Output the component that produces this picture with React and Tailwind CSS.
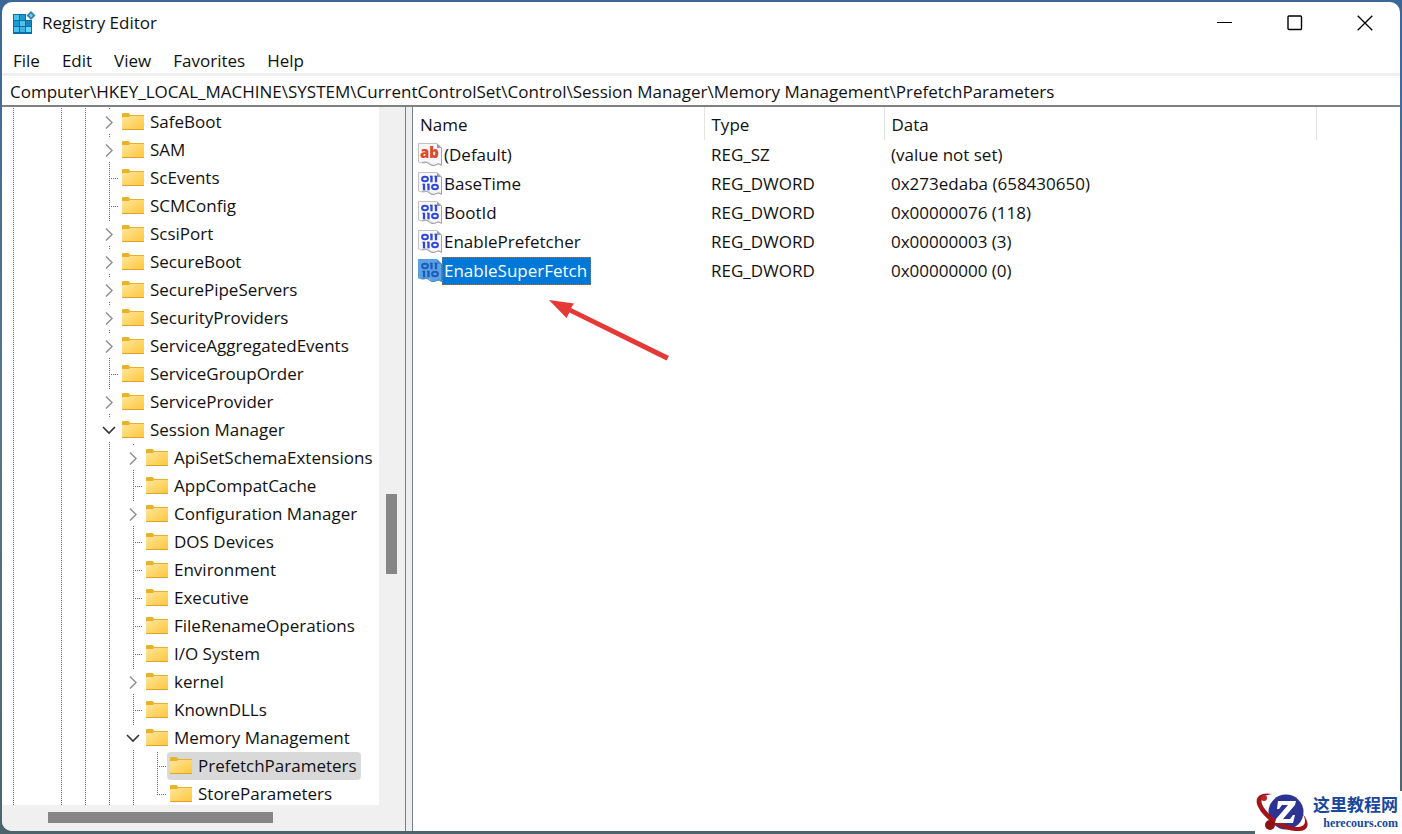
const PATH =
  "Computer\\HKEY_LOCAL_MACHINE\\SYSTEM\\CurrentControlSet\\Control\\Session Manager\\Memory Management\\PrefetchParameters";

const TREE = [
  { label: "SafeBoot", depth: 0, state: "closed" },
  { label: "SAM", depth: 0, state: "closed" },
  { label: "ScEvents", depth: 0 },
  { label: "SCMConfig", depth: 0 },
  { label: "ScsiPort", depth: 0, state: "closed" },
  { label: "SecureBoot", depth: 0, state: "closed" },
  { label: "SecurePipeServers", depth: 0, state: "closed" },
  { label: "SecurityProviders", depth: 0, state: "closed" },
  { label: "ServiceAggregatedEvents", depth: 0, state: "closed" },
  { label: "ServiceGroupOrder", depth: 0 },
  { label: "ServiceProvider", depth: 0, state: "closed" },
  { label: "Session Manager", depth: 0, state: "open" },
  { label: "ApiSetSchemaExtensions", depth: 1, state: "closed" },
  { label: "AppCompatCache", depth: 1 },
  { label: "Configuration Manager", depth: 1, state: "closed" },
  { label: "DOS Devices", depth: 1 },
  { label: "Environment", depth: 1 },
  { label: "Executive", depth: 1 },
  { label: "FileRenameOperations", depth: 1 },
  { label: "I/O System", depth: 1 },
  { label: "kernel", depth: 1, state: "closed" },
  { label: "KnownDLLs", depth: 1 },
  { label: "Memory Management", depth: 1, state: "open" },
  { label: "PrefetchParameters", depth: 2, selected: true },
  { label: "StoreParameters", depth: 2, last: true },
];

const VALUES = [
  { name: "(Default)", type: "REG_SZ", data: "(value not set)", kind: "string" },
  { name: "BaseTime", type: "REG_DWORD", data: "0x273edaba (658430650)" },
  { name: "BootId", type: "REG_DWORD", data: "0x00000076 (118)" },
  { name: "EnablePrefetcher", type: "REG_DWORD", data: "0x00000003 (3)" },
  { name: "EnableSuperFetch", type: "REG_DWORD", data: "0x00000000 (0)", selected: true },
];

function AppIcon() {
  const cells = [
    [0, 0, "#4cc3ea"], [1, 0, "#1b9ad2"],
    [0, 1, "#1b9ad2"], [1, 1, "#4cc3ea"], [2, 1, "#1487c0"],
    [0, 2, "#4cc3ea"], [1, 2, "#3bb4e2"], [2, 2, "#63d4f4"],
  ];
  return (
    <svg width="24" height="24" viewBox="0 0 24 24" aria-hidden="true">
      <path d="M1 3h13v6h6v14H1z" fill="#0a6fa8" />
      {cells.map(([x, y, fill]) => (
        <rect key={`${x}${y}`} x={2 + x * 6} y={4 + y * 6} width="5" height="5" fill={fill} />
      ))}
      <path d="M19 0 23.500 4.500 19 9 14.500 4.500z" fill="#2b86b4" />
      <path d="M19 2.500 21 4.500 19 6.500 17 4.500z" fill="#7fcbe6" />
    </svg>
  );
}

function Folder() {
  return (
    <svg width="22" height="18" viewBox="0 0 22 18" className="shrink-0" aria-hidden="true">
      <defs>
        <linearGradient id="folder" x1="0" y1="0" x2="1" y2="1">
          <stop offset="0" stopColor="#ffe79a" />
          <stop offset="1" stopColor="#fdc63a" />
        </linearGradient>
      </defs>
      <path d="M0 1.2Q0 0 1.2 0H6.5L8.5 2H22V6H0z" fill="#e8b22c" />
      <path d="M0 4H6.5L8.5 3H22V17H0z" fill="url(#folder)" />
      <path d="M0 16.5H22" stroke="#dfa32a" />
    </svg>
  );
}

function Guide({ wide }) {
  return (
    <span className={wide ? "flex w-[23px] shrink-0 pl-[11px]" : "flex w-6 shrink-0 pl-3"}>
      <svg width="1" height="28" shapeRendering="crispEdges" aria-hidden="true">
        <path d="M.5 0V28" stroke="#6b6b6b" strokeDasharray="1 1" />
      </svg>
    </span>
  );
}

function Connector({ state, last }) {
  return (
    <svg width="22" height="28" viewBox="0 0 22 28" className="shrink-0" aria-hidden="true">
      <g stroke="#6b6b6b" strokeDasharray="1 1" shapeRendering="crispEdges" fill="none">
        {state ? <path d="M12.5 0V2M12.5 26V28" /> : <path d={last ? "M12.5 0V14" : "M12.5 0V28"} />}
        {!state && <path d="M12 14.5H22" />}
      </g>
      {state === "closed" && <path d="M9 8.5 15 14.5 9 20.5" fill="none" stroke="#8c8c8c" strokeWidth="1.4" />}
      {state === "open" && <path d="M6 11 12 17 18 11" fill="none" stroke="#333" strokeWidth="1.6" />}
    </svg>
  );
}

function ValueIcon({ kind, selected }) {
  const ink = selected ? "#1c5bb8" : "#2f48d8";
  return (
    <svg width="24" height="24" viewBox="0 0 24 24" className="shrink-0 overflow-visible" aria-hidden="true">
      <path
        d="M.5 .5H19L23.500 5V22.500Q21 20 18.500 21.500T13 21.500Q11 18 8 19.500T.5 19z"
        fill={selected ? "#5ba3e6" : "#f7f7fb"}
        stroke={selected ? "#5a9bdb" : "#c2c2c6"}
      />
      <path d="M4 19.500Q8 18 10 20T14 22.500Q17 23 18.500 21.500T23.500 22" fill="none" stroke={selected ? "#4a86c4" : "#a2a2a6"} />
      <path d="M19 .5V5H23.500z" fill={selected ? "#4a86c4" : "#9a9a9e"} />
      <path d="M23.500 5V22" stroke={selected ? "#4a86c4" : "#a2a2a6"} />
      {kind === "string" ? (
        <text x="2" y="15" fontFamily="Open Sans, sans-serif" fontWeight="800" fontSize="15" fill="#dc4a2c">
          ab
        </text>
      ) : (
        <g fill="none" stroke={ink} strokeWidth="2">
          <ellipse cx="7" cy="7" rx="2.900" ry="2.300" />
          <path d="M13.500 3.700V10.300M18 3.700V10.300M6 11.800V18.300M10.500 11.800V18.300" strokeWidth="2.300" />
          <path d="M12 4.300H13.500M16.500 4.300H18M4.500 12.400H6M9 12.400H10.500" strokeWidth="1.200" />
          <ellipse cx="17" cy="15" rx="2.900" ry="2.300" />
        </g>
      )}
    </svg>
  );
}

function TreeRow({ label, depth, state, selected, last }) {
  return (
    <li
      role="treeitem"
      aria-level={depth + 4}
      aria-selected={!!selected}
      aria-expanded={state ? state === "open" : undefined}
      className="flex h-7"
    >
      <Guide wide />
      <span className="w-6 shrink-0" />
      <Guide />
      <Guide />
      {Array.from({ length: depth }, (_, i) => (
        <Guide key={i} />
      ))}
      <Connector state={state} last={last} />
      <button
        type="button"
        className={`flex items-center gap-1.5 pr-1 pl-[3px] whitespace-nowrap ${selected ? "rounded-sm bg-[#d9d9d9]" : ""}`}
      >
        <Folder />
        {label}
      </button>
    </li>
  );
}

function Watermark() {
  return (
    <div className="absolute right-0 bottom-0 flex h-[43px] w-[147px] items-center justify-between bg-white pr-1">
      <svg width="56" height="43" viewBox="0 0 56 43" aria-hidden="true">
        <circle cx="31" cy="21" r="17.500" fill="#2c3392" />
        <path
          d="M17 3C7 1 0 5 2 13C6 25 22 38 40 40C53 41 57 34 47 22C53 31 50 37 40 36C26 34 11 23 7 13C5 7 9 4 17 3z"
          fill="#a3141a"
        />
        <circle cx="9" cy="7" r="3" fill="#b8262c" />
        <circle cx="15" cy="34" r="5" fill="#8e1116" />
        <path d="M23 10H41L40 14L28 28H35L38 24H40L38 32H20L21 28L33 14H27L24 18H22z" fill="#fff" />
      </svg>
      <div className="flex flex-col items-end">
        <span className="font-['Liberation_Serif','Noto_Sans_CJK_SC',serif] text-[17px] leading-[20px] font-bold text-[#17479e]">
          这里教程网
        </span>
        <span className="font-['Liberation_Serif',serif] text-[12px] leading-[14px] font-bold text-[#17479e]">
          herecours.com
        </span>
      </div>
    </div>
  );
}

export default function App() {
  return (
    <div className="relative flex h-screen flex-col bg-linear-to-b from-[#3b6797] via-[#55768f] to-[#4d646c] px-0.5 pt-0.5 pb-[3px] font-['Open_Sans',sans-serif] text-[17px] leading-6 text-[#111]">
      <main className="flex min-h-0 flex-1 flex-col overflow-hidden rounded-[10px] bg-white">
        <header className="flex h-[42px] shrink-0 items-center pl-2.5">
          <AppIcon />
          <h1 className="flex-1 pl-1.5">Registry Editor</h1>
          <div className="flex h-full">
            <button type="button" aria-label="Minimize" className="grid w-[70px] place-items-center">
              <svg width="16" height="16" viewBox="0 0 16 16"><path d="M0 7.500H15" stroke="#000" /></svg>
            </button>
            <button type="button" aria-label="Maximize" className="grid w-[70px] place-items-center">
              <svg width="16" height="16" viewBox="0 0 16 16"><rect x="1" y="1" width="13.500" height="13.500" rx="1" fill="none" stroke="#000" strokeWidth="1.400" /></svg>
            </button>
            <button type="button" aria-label="Close" className="grid w-[70px] place-items-center">
              <svg width="16" height="16" viewBox="0 0 16 16"><path d="M.7.7 15.300 15.300M15.300.7.7 15.300" stroke="#000" strokeWidth="1.300" /></svg>
            </button>
          </div>
        </header>

        <nav className="flex h-[29px] shrink-0 pt-1">
          {["File", "Edit", "View", "Favorites", "Help"].map((item) => (
            <button key={item} type="button" className="px-[11px]">{item}</button>
          ))}
        </nav>

        <input
          aria-label="Address"
          defaultValue={PATH}
          className="h-[34px] w-full shrink-0 border-t-3 border-b-2 border-t-[#f0f0f0] border-b-[#808080] px-2 pt-px outline-none"
        />

        <div className="flex min-h-0 flex-1">
          <section className="flex w-[403px] shrink-0 flex-col bg-[#f0f0f0]">
            <div className="flex min-h-0 flex-1">
              <ul role="tree" aria-label="Registry keys" className="min-w-0 flex-1 overflow-hidden bg-white pt-px">
                {TREE.map((node) => (
                  <TreeRow key={node.label} {...node} />
                ))}
              </ul>
              <div className="w-[26px] pt-[387px] pl-[7px]">
                <div className="h-20 w-[11px] bg-[#868686]" />
              </div>
            </div>
            <div className="h-[26px] shrink-0 pt-[7px] pl-[46px]">
              <div className="h-[11px] w-[225px] bg-[#868686]" />
            </div>
          </section>

          <div className="w-2 shrink-0 border-x border-[#7a7f84] bg-[#eceff2]" />

          <section className="relative min-w-0 flex-1 overflow-hidden">
            <table className="w-full table-fixed border-collapse text-left">
              <colgroup>
                <col className="w-[291px]" />
                <col className="w-[180px]" />
                <col className="w-[432px]" />
                <col />
              </colgroup>
              <thead>
                <tr className="h-[33px]">
                  <th className="border-r border-[#e4e4e4] px-[7px] pt-0.5 font-normal">Name</th>
                  <th className="border-r border-[#e4e4e4] px-[7px] pt-0.5 font-normal">Type</th>
                  <th className="border-r border-[#e4e4e4] px-[7px] pt-0.5 font-normal">Data</th>
                  <td />
                </tr>
              </thead>
              <tbody>
                {VALUES.map(({ name, type, data, kind, selected }) => (
                  <tr key={name} className="h-[29px]">
                    <td className="p-0 pl-[5px]">
                      <span className="flex items-center">
                        <ValueIcon kind={kind} selected={selected} />
                        <span
                          className={`py-0.5 pr-1 pl-0.5 ${
                            selected ? "bg-[#0078d7] text-white outline-1 -outline-offset-1 outline-[#7a7a7a] outline-dotted" : ""
                          }`}
                        >
                          {name}
                        </span>
                      </span>
                    </td>
                    <td className="px-[7px] py-0">{type}</td>
                    <td className="px-[7px] py-0">{data}</td>
                    <td />
                  </tr>
                ))}
              </tbody>
            </table>
            <svg width="122" height="64" viewBox="0 0 122 64" className="absolute top-[192px] left-[135px]" aria-hidden="true">
              <path d="M1 1 26 4.500 23 9 121 57 118.500 61.500 21.500 13.500 18.500 19z" fill="#e53935" />
            </svg>
          </section>
        </div>
      </main>
      <Watermark />
    </div>
  );
}
